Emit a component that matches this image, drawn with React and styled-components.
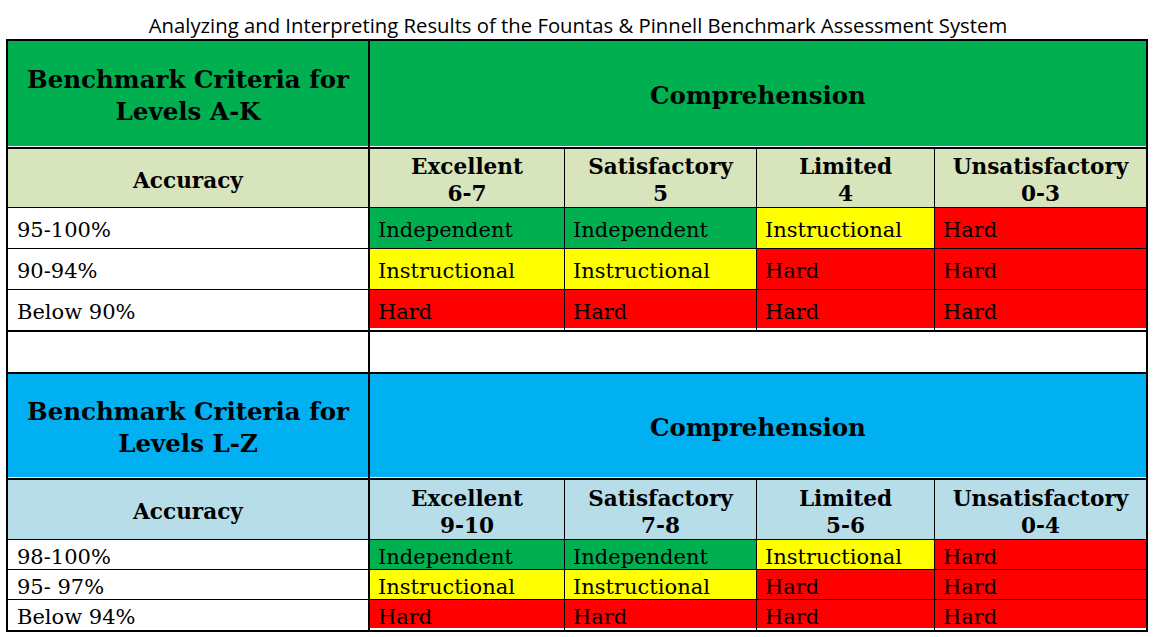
import React from 'react';
import styled, { createGlobalStyle } from 'styled-components';

const GlobalStyle = createGlobalStyle`
  body {
    margin: 0;
    background: #fff;
  }
`;

const colors = {
  green: '#00B050',
  paleGreen: '#D8E4BC',
  blue: '#00B0F0',
  paleBlue: '#B7DDE8',
  yellow: '#FFFF00',
  red: '#FF0000',
};

const Page = styled.div`
  width: 1156px;
  height: 637px;
  overflow: hidden;
`;

const Title = styled.h1`
  margin: 0;
  height: 39px;
  padding-top: 12px;
  box-sizing: border-box;
  text-align: center;
  font-family: "Open Sans", "Noto Sans", sans-serif;
  font-weight: 400;
  font-size: 20.3px;
  line-height: 26px;
  color: #000;
  white-space: nowrap;
`;

const Table = styled.div`
  margin-left: 6px;
  width: 1142px;
  box-sizing: border-box;
  border: 2px solid #000;
  display: grid;
  grid-template-columns: 362px 195px 192px 178px 211px;
`;

const Cell = styled.div`
  box-sizing: border-box;
  height: ${p => p.$h}px;
  grid-column: span ${p => p.$span || 1};
  background: ${p => p.$bg || '#fff'};
  border-right: ${p => p.$br ?? 1}px solid #000;
  border-bottom: ${p => p.$bb ?? 1}px solid #000;
  box-shadow: ${p => (p.$gap ? `inset 0 -${p.$gap}px 0 #fff` : 'none')};
  display: flex;
  align-items: center;
  justify-content: ${p => (p.$center ? 'center' : 'flex-start')};
  text-align: ${p => (p.$center ? 'center' : 'left')};
  padding: 4px 0 0 ${p => p.$pad || 0}px;
  font-family: "DejaVu Serif", "Liberation Serif", serif;
  font-size: 21px;
  line-height: 24px;
  color: #000;
  white-space: nowrap;
`;

const BigHead = styled.span`
  font-weight: 700;
  font-size: 24.5px;
  line-height: 32px;
`;

const ScoreHead = styled.span`
  font-weight: 700;
  font-size: 21.6px;
  line-height: 27px;
`;

const resultColor = {
  Independent: colors.green,
  Instructional: colors.yellow,
  Hard: colors.red,
};

const sections = [
  {
    level: 'A-K',
    head: colors.green,
    pale: colors.paleGreen,
    headH: 108,
    scoreH: 59,
    rowH: 41,
    scores: [
      ['Excellent', '6-7'],
      ['Satisfactory', '5'],
      ['Limited', '4'],
      ['Unsatisfactory', '0-3'],
    ],
    rows: [
      ['95-100%', 'Independent', 'Independent', 'Instructional', 'Hard'],
      ['90-94%', 'Instructional', 'Instructional', 'Hard', 'Hard'],
      ['Below 90%', 'Hard', 'Hard', 'Hard', 'Hard'],
    ],
  },
  {
    level: 'L-Z',
    head: colors.blue,
    pale: colors.paleBlue,
    headH: 106,
    scoreH: 60,
    rowH: 30,
    scores: [
      ['Excellent', '9-10'],
      ['Satisfactory', '7-8'],
      ['Limited', '5-6'],
      ['Unsatisfactory', '0-4'],
    ],
    rows: [
      ['98-100%', 'Independent', 'Independent', 'Instructional', 'Hard'],
      ['95- 97%', 'Instructional', 'Instructional', 'Hard', 'Hard'],
      ['Below 94%', 'Hard', 'Hard', 'Hard', 'Hard'],
    ],
  },
];

const Section = ({ s, last }) => (
  <>
    <Cell $h={s.headH} $bg={s.head} $br={2} $bb={2} $gap={1} $center>
      <BigHead>
        Benchmark Criteria for
        <br />
        Levels {s.level}
      </BigHead>
    </Cell>
    <Cell $h={s.headH} $span={4} $bg={s.head} $br={0} $bb={2} $gap={1} $center>
      <BigHead>Comprehension</BigHead>
    </Cell>

    <Cell $h={s.scoreH} $bg={s.pale} $br={2} $center>
      <ScoreHead>Accuracy</ScoreHead>
    </Cell>
    {s.scores.map(([name, range], i) => (
      <Cell key={name} $h={s.scoreH} $bg={s.pale} $br={i === 3 ? 0 : 1} $center>
        <ScoreHead>
          {name}
          <br />
          {range}
        </ScoreHead>
      </Cell>
    ))}

    {s.rows.map((row, r) => {
      const final = r === s.rows.length - 1;
      const bb = final ? (last ? 0 : 2) : 1;
      const h = final ? s.rowH + (last ? 0 : 1) : s.rowH;
      return row.map((text, c) => (
        <Cell
          key={`${r}-${c}`}
          $h={h}
          $bb={bb}
          $br={c === 0 ? 2 : c === 4 ? 0 : 1}
          $bg={c === 0 ? '#fff' : resultColor[text]}
          $gap={final && c > 0 ? 2 : 0}
          $pad={c === 0 ? 9 : 8}
        >
          {text}
        </Cell>
      ));
    })}
  </>
);

export default function App() {
  return (
    <Page>
      <GlobalStyle />
      <Title>
        Analyzing and Interpreting Results of the Fountas &amp; Pinnell Benchmark Assessment System
      </Title>
      <Table>
        <Section s={sections[0]} />
        <Cell $h={42} $br={2} $bb={2} />
        <Cell $h={42} $span={4} $br={0} $bb={2} />
        <Section s={sections[1]} last />
      </Table>
    </Page>
  );
}
